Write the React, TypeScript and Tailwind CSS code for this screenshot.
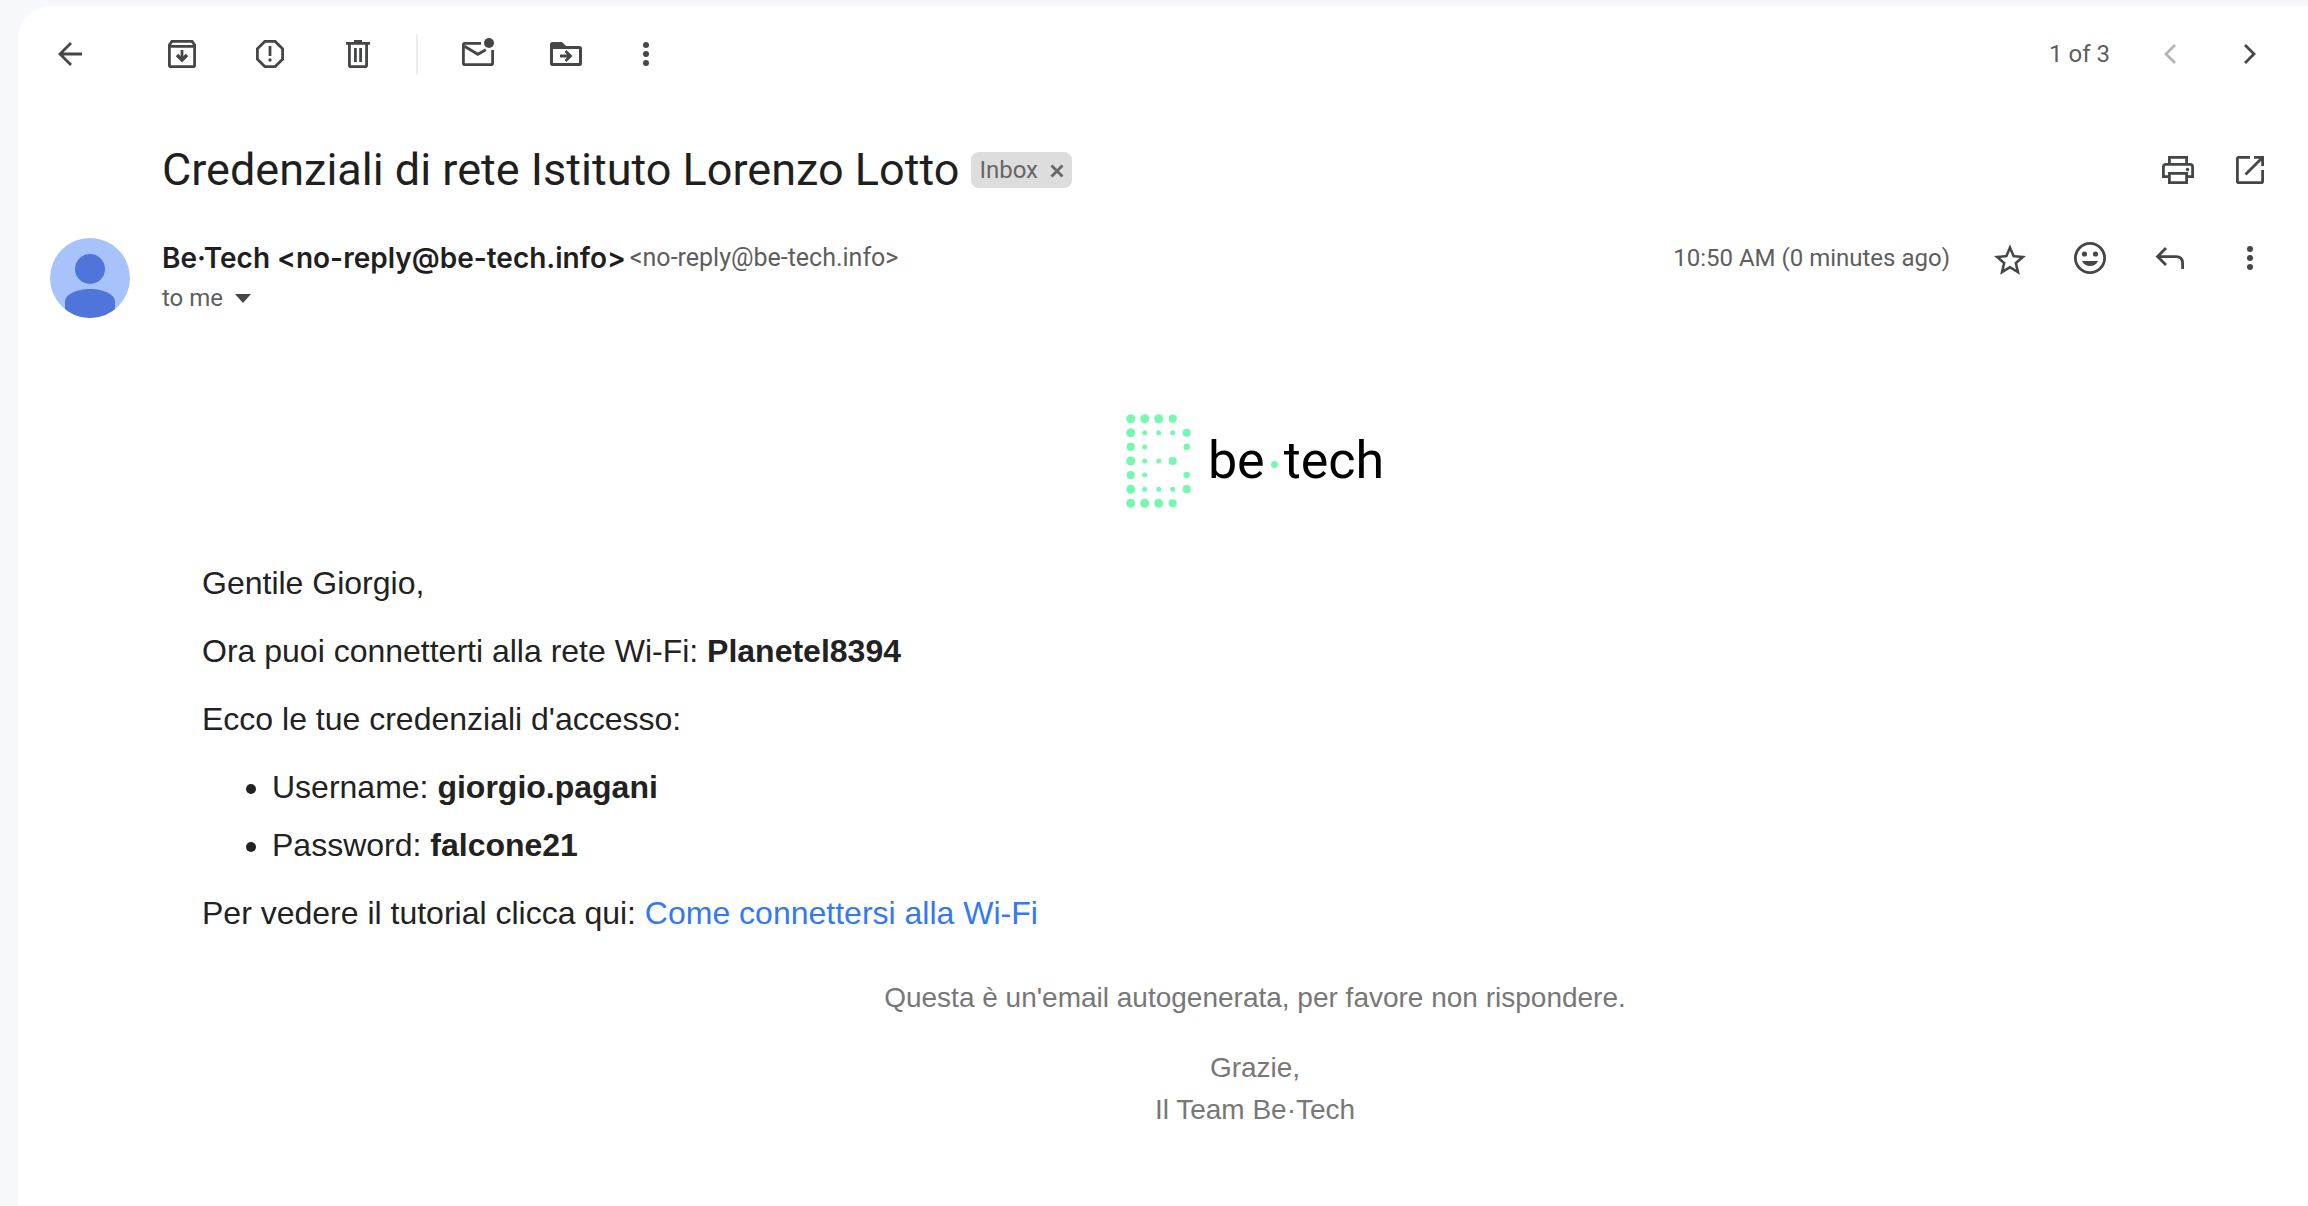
import React from "react";

type IconProps = { children: React.ReactNode };

function Icon({ children }: IconProps) {
  return (
    <svg
      viewBox="0 0 40 40"
      className="size-10"
      fill="none"
      stroke="currentColor"
      strokeWidth="2.8"
      aria-hidden="true"
    >
      {children}
    </svg>
  );
}

type IconButtonProps = { label: string; disabled?: boolean; children: React.ReactNode };

function IconButton({ label, disabled, children }: IconButtonProps) {
  return (
    <button
      type="button"
      aria-label={label}
      disabled={disabled}
      className="shrink-0 rounded-full text-[#444746] disabled:text-[#b4b5b5]"
    >
      <Icon>{children}</Icon>
    </button>
  );
}

function MoreDots() {
  return (
    <g fill="currentColor" stroke="none">
      <circle cx="20" cy="11" r="3" />
      <circle cx="20" cy="20" r="3" />
      <circle cx="20" cy="29" r="3" />
    </g>
  );
}

function Toolbar() {
  return (
    <header className="flex h-24 items-center justify-between">
      <div className="flex items-center">
        <IconButton label="Back to Inbox">
          <path d="M32 20H10M21 9 10 20l11 11" />
        </IconButton>
        <div className="ml-[72px] flex items-center gap-12">
          <IconButton label="Archive">
            <path d="M7.4 12.4v18.8q0 1.4 1.4 1.4h22.4q1.4 0 1.4-1.4V12.4zM7.4 12.9v-2L9.9 7.4h20.2l2.5 3.5v2" />
            <path d="M20 16v10" />
            <path d="m15 21 5 5 5-5" strokeWidth="3.4" />
          </IconButton>
          <IconButton label="Report spam">
            <path d="M14.8 7.4h10.4l7.4 7.4v10.4l-7.4 7.4H14.8l-7.4-7.4V14.8z" />
            <path d="M20 12v10" />
            <circle cx="20" cy="26" r="1.7" fill="currentColor" stroke="none" />
          </IconButton>
          <IconButton label="Delete">
            <path d="M8 9.4h24M16 7.4h8M11.4 10v21.2q0 1.4 1.4 1.4h14.4q1.4 0 1.4-1.4V10M17.4 14v14M22.6 14v14" />
          </IconButton>
        </div>
        <div className="ml-[38px] mr-10 h-10 w-0.5 bg-[#ececec]" />
        <div className="flex items-center gap-12">
          <IconButton label="Mark as unread">
            <path d="M23 9.4H6.8q-1.4 0-1.4 1.4v18.4q0 1.4 1.4 1.4h26.4q1.4 0 1.4-1.4V16" />
            <path d="m6.5 12.3 13.3 8 8-4.6" />
            <circle cx="31" cy="9" r="5" fill="currentColor" stroke="none" />
          </IconButton>
          <IconButton label="Move to">
            <path
              d="M6.5 8H16l4 4h13.5q2.5 0 2.5 2.5v15q0 2.5-2.5 2.5h-27q-2.5 0-2.5-2.5v-19Q4 8 6.5 8zM7 15v14h26V15z"
              fill="currentColor"
              fillRule="evenodd"
              stroke="none"
            />
            <path d="M14 22h10M19.5 17l5 5-5 5" />
          </IconButton>
        </div>
        <div className="ml-10 flex">
          <IconButton label="More options">
            <MoreDots />
          </IconButton>
        </div>
      </div>
      <nav className="flex items-center gap-10" aria-label="Conversations">
        <span className="text-2xl text-[#5e5e5e]">1 of 3</span>
        <IconButton label="Newer" disabled>
          <path d="M25 11l-9 9 9 9" />
        </IconButton>
        <IconButton label="Older">
          <path d="M15 11l9 9-9 9" />
        </IconButton>
      </nav>
    </header>
  );
}

function SubjectRow() {
  return (
    <div className="flex h-[136px] items-center justify-between pl-28">
      <div className="flex items-center gap-3">
        <h1 className="text-[45px] font-normal text-[#1f1f1f]">
          Credenziali di rete Istituto Lorenzo Lotto
        </h1>
        <span className="flex h-9 items-center gap-3 rounded-lg bg-[#ddd] px-2 text-2xl text-[#666]">
          Inbox
          <button type="button" aria-label="Remove label Inbox">
            <svg viewBox="0 0 14 14" className="mt-0.5 size-3.5" stroke="currentColor" strokeWidth="2.8" aria-hidden="true">
              <path d="M1.5 1.5l11 11M12.5 1.5l-11 11" />
            </svg>
          </button>
        </span>
      </div>
      <div className="flex items-center gap-8">
        <IconButton label="Print all">
          <path d="M11.4 15V7.4h17.2V15M11.4 26.6h-6V17q0-2.6 2.6-2.6h24q2.6 0 2.6 2.6v9.6h-6M11.4 23.4h17.2v9.2H11.4z" />
          <circle cx="29.5" cy="19.5" r="1.7" fill="currentColor" stroke="none" />
        </IconButton>
        <IconButton label="Open in new window">
          <path d="M20 7.4H8.8q-1.4 0-1.4 1.4v22.4q0 1.4 1.4 1.4h22.4q1.4 0 1.4-1.4V20M24 7.4h8.6V16M32 8 15.5 24.5" />
        </IconButton>
      </div>
    </div>
  );
}

function Avatar() {
  return (
    <svg viewBox="0 0 80 80" className="size-20 shrink-0" role="img" aria-label="Be·Tech">
      <clipPath id="avatar-circle">
        <circle cx="40" cy="40" r="40" />
      </clipPath>
      <g clipPath="url(#avatar-circle)">
        <rect width="80" height="80" fill="#a8c3fb" />
        <circle cx="40" cy="31" r="15" fill="#4f74da" />
        <path d="M15 80V64c0-8 12-13 25-13s25 5 25 13v16z" fill="#4f74da" />
      </g>
    </svg>
  );
}

function SenderRow() {
  return (
    <div className="flex gap-8">
      <Avatar />
      <div className="flex-1">
        <div className="flex h-10 items-center justify-between">
          <p className="flex items-center gap-1 whitespace-nowrap">
            <span className="font-['Inter',sans-serif] text-[28px] font-semibold text-[#1f1f1f]">
              Be·Tech &lt;no-reply@be-tech.info&gt;
            </span>
            <span className="text-[25px] text-[#5e5e5e]">&lt;no-reply@be-tech.info&gt;</span>
          </p>
          <div className="flex items-center gap-10">
            <time className="text-2xl text-[#5e5e5e]">10:50 AM (0 minutes ago)</time>
            <IconButton label="Star">
              <path
                transform="translate(.8 3.1) scale(1.6)"
                fill="currentColor"
                stroke="none"
                d="M22 9.24l-7.19-.62L12 2 9.19 8.63 2 9.24l5.46 4.73L5.82 21 12 17.27 18.18 21l-1.63-7.03L22 9.24zM12 15.4l-3.76 2.27 1-4.28-3.32-2.88 4.38-.38L12 6.1l1.71 4.04 4.38.38-3.32 2.88 1 4.28L12 15.4z"
              />
            </IconButton>
            <IconButton label="Add reaction">
              <circle cx="20" cy="20" r="14.6" />
              <g fill="currentColor" stroke="none">
                <circle cx="14.5" cy="16" r="2.6" />
                <circle cx="25.5" cy="16" r="2.6" />
                <path d="M12 23h16c-1.4 3.2-4.4 5-8 5s-6.6-1.8-8-5z" />
              </g>
            </IconButton>
            <IconButton label="Reply">
              <path d="M8 18.6h18q6.6 0 6.6 6.6V31M16 10l-8.5 8.6 8.5 8.5" />
            </IconButton>
            <IconButton label="More message options">
              <MoreDots />
            </IconButton>
          </div>
        </div>
        <button type="button" className="flex h-10 items-center gap-3 text-2xl text-[#5e5e5e]">
          to me
          <svg viewBox="0 0 16 9" className="h-[9px] w-4" fill="#444746" aria-hidden="true">
            <path d="M0 0h16L8 9z" />
          </svg>
        </button>
      </div>
    </div>
  );
}

// Radius of each dot in the logo's "B"; 0 leaves the cell empty.
const logoDots = [
  [4.5, 4.5, 4.5, 4.1, 0],
  [4.5, 2.5, 2.5, 2.5, 4.1],
  [4.1, 2.5, 0, 0, 3.3],
  [4.5, 2.5, 2.5, 4.1, 0],
  [4.1, 2.5, 0, 0, 3.3],
  [4.5, 2.5, 2.5, 2.5, 4.1],
  [4.5, 4.5, 4.5, 4.1, 0],
];

function Logo() {
  return (
    <div className="flex h-24 items-center justify-center font-['Roboto',sans-serif] text-black">
      <svg viewBox="0 0 66 96" className="mr-4 h-24 w-[66px]" fill="#75f8b0" aria-hidden="true">
        {logoDots.map((row, y) =>
          row.map((r, x) =>
            r > 0 ? <circle key={`${x}-${y}`} cx={4.7 + 14 * x} cy={5.7 + 14.1 * y} r={r} /> : null,
          ),
        )}
      </svg>
      <span className="text-[52px] font-[450]">be</span>
      <span className="mx-1.5 mt-1.5 size-[7px] rounded-full bg-[#75f8b0]" />
      <span className="text-[52px] font-[450]">tech</span>
    </div>
  );
}

function MessageBody() {
  return (
    <article className="-mr-[38px] mt-[95px] pl-[152px] font-['Liberation_Sans',Arial,sans-serif] text-[32px] leading-[48px] text-[#222]">
      <Logo />
      <div className="mt-[50px] flex flex-col gap-5">
        <p>Gentile Giorgio,</p>
        <p>
          Ora puoi connetterti alla rete Wi-Fi: <b>Planetel8394</b>
        </p>
        <p>Ecco le tue credenziali d'accesso:</p>
        <ul className="flex list-disc flex-col gap-2.5 pl-[70px]">
          <li>
            Username: <b>giorgio.pagani</b>
          </li>
          <li>
            Password: <b>falcone21</b>
          </li>
        </ul>
        <p>
          Per vedere il tutorial clicca qui:{" "}
          <a href="#tutorial" className="text-[#3478f6]">
            Come connettersi alla Wi-Fi
          </a>
        </p>
      </div>
      <footer className="mt-10 flex flex-col gap-7 text-center text-[28px] leading-[42px] text-[#777]">
        <p>Questa è un'email autogenerata, per favore non rispondere.</p>
        <p>
          Grazie,
          <br />
          Il Team Be·Tech
        </p>
      </footer>
    </article>
  );
}

export default function App() {
  return (
    <div className="flex min-h-screen flex-col overflow-x-hidden bg-[#f6f8fc] pl-[18px] pt-1.5 font-['Roboto',sans-serif]">
      <main className="flex-1 rounded-tl-[32px] bg-white pb-10 pl-8 pr-[38px]">
        <Toolbar />
        <SubjectRow />
        <SenderRow />
        <MessageBody />
      </main>
    </div>
  );
}
